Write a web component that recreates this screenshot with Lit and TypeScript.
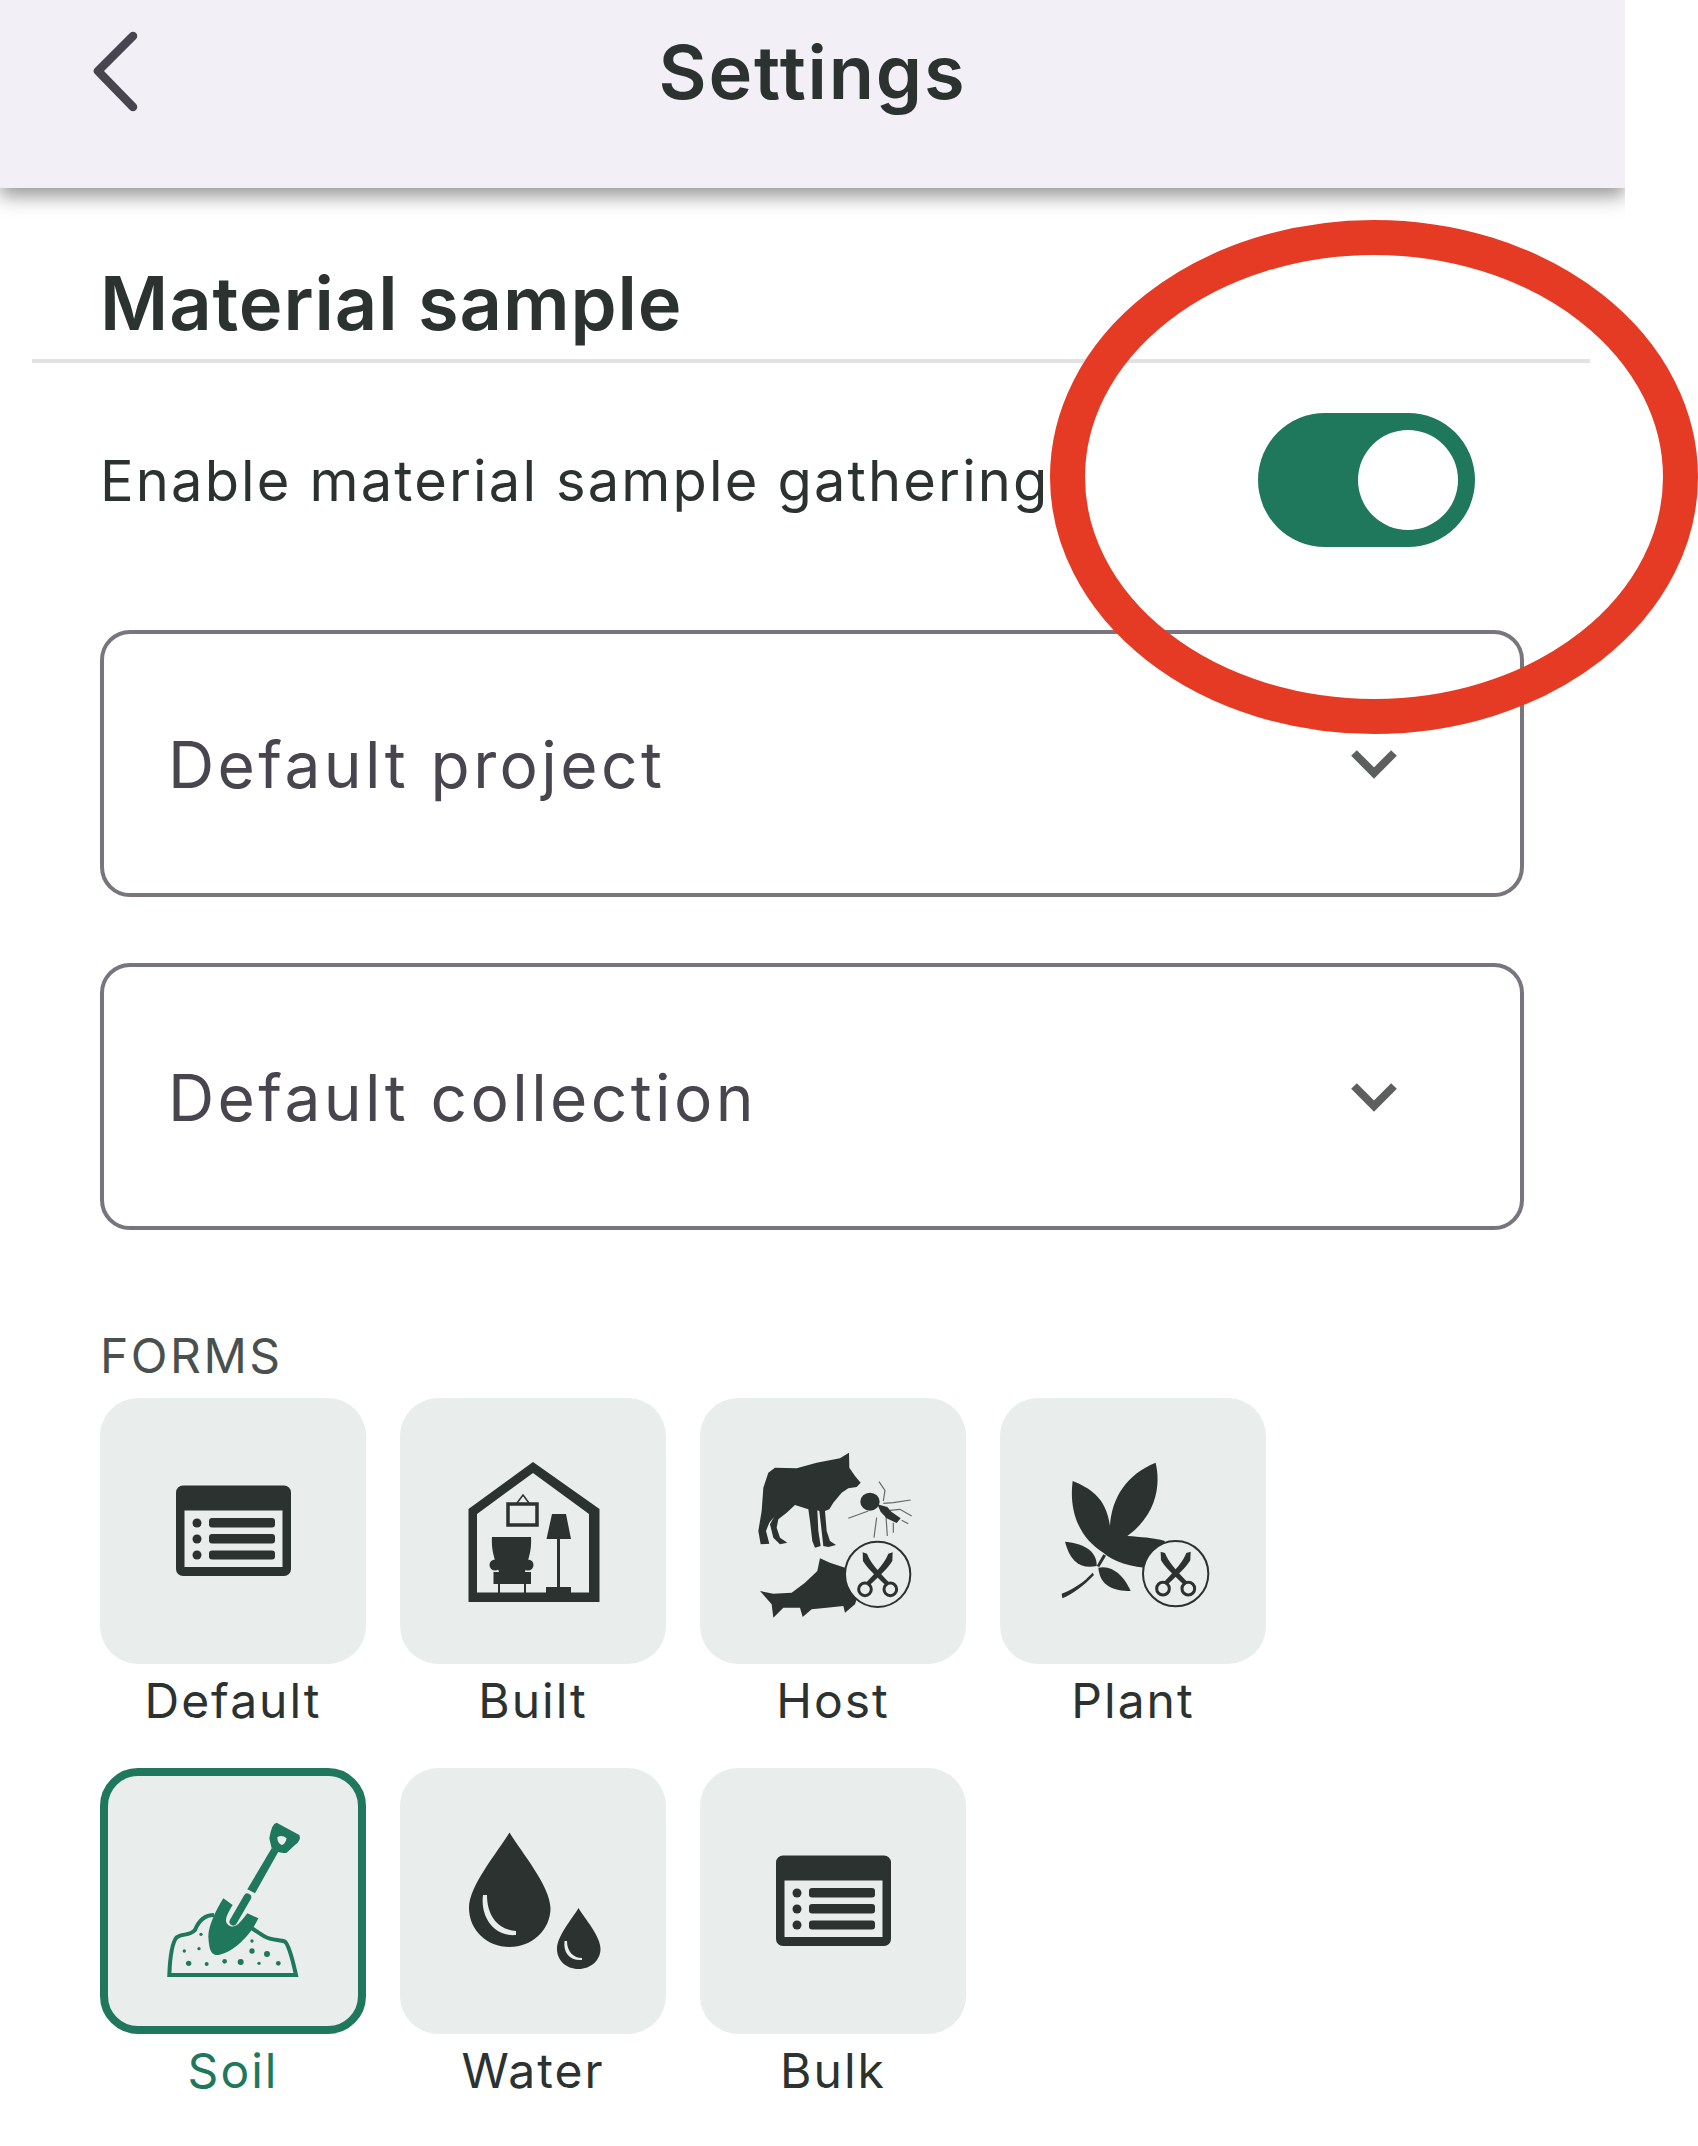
import { LitElement, css, html, svg } from 'lit';
import { customElement } from 'lit/decorators.js';
import { classMap } from 'lit/directives/class-map.js';

// icon coords were read off 3x crops, so they get scaled down by a third
const scissors = (dx: number, dy: number) => svg`
  <g transform="translate(${dx} ${dy})">
    <circle cx="443" cy="430" r="98" fill="#e9edec" stroke="currentColor" stroke-width="6" />
    <path d="M398 364 L411 368 C420 392 442 418 479 456 L470 465 C440 438 412 412 399 390Z" />
    <path d="M488 364 L475 368 C466 392 444 418 407 456 L416 465 C446 438 474 412 487 390Z" />
    <circle cx="405" cy="475" r="19" fill="none" stroke="currentColor" stroke-width="9" />
    <circle cx="481" cy="475" r="19" fill="none" stroke="currentColor" stroke-width="9" />
  </g>`;

const listIcon = svg`
  <path fill-rule="evenodd" d="M83 87.5H184a7 7 0 0 1 7 7V171a7 7 0 0 1-7 7H83a7 7 0 0 1-7-7V94.5a7 7 0 0 1 7-7ZM84.500 112.500V169H182.500V112.500Z" />
  <circle cx="97" cy="125" r="4.500" /><circle cx="97" cy="141" r="4.500" /><circle cx="97" cy="157" r="4.500" />
  <rect x="109" y="120" width="66" height="9.500" rx="3" />
  <rect x="109" y="136" width="66" height="9.500" rx="3" />
  <rect x="109" y="152.500" width="66" height="9" rx="3" />`;

const builtIcon = svg`
  <path fill-rule="evenodd" d="M133 64 L199.500 111 V204 H68.500 V111Z M133 75 L77 116 V194.500 H189 V116Z" />
  <path fill="none" stroke="currentColor" stroke-width="3.500" d="M108 106H137V127H108Z" />
  <path fill="none" stroke="currentColor" stroke-width="1.500" d="M117 105 L123 97 L129 105" />
  <path d="M152 116H166L171 141H146.500Z" />
  <rect x="157" y="141" width="3" height="50" />
  <rect x="146" y="189" width="25" height="6" />
  <path d="M92 139H131Q132 152 127 165 L125 174 H131 V186 H93.500 V174 H99 L96 165 Q91 152 92 139Z" />
  <circle cx="95" cy="167" r="5.500" /><circle cx="128" cy="167" r="5.500" />
  <rect x="98" y="186" width="2" height="9" /><rect x="124" y="186" width="2" height="9" />`;

const hostIcon = svg`
  <g transform="translate(30 33) scale(.3333)">
    <path d="M357 65 L358 110 L375 135 L392 155 L380 168 L355 172 L335 185 L310 215 L298 235 L285 240 L290 300 L300 330 L318 342 L295 348 L280 345 L275 300 L268 240 L262 238 L265 300 L272 345 L255 350 L247 330 L240 270 L235 235 L195 222 L170 245 L145 265 L140 290 L150 320 L172 335 L150 340 L130 320 L120 280 L132 258 L118 275 L108 300 L118 338 L92 340 L85 300 L95 240 L100 170 L115 125 L135 110 L200 112 L260 95 L330 82Z" />
    <ellipse cx="420" cy="212" rx="29" ry="27" />
    <path d="M442 220 L472 228 L484 242 L512 262 L500 276 L470 262 L452 242Z" />
    <path fill="none" stroke="currentColor" stroke-width="3.500" opacity=".7" d="M447 152L465 178L460 210M460 217L490 215L542 207M415 240L355 262M480 238L510 235L545 255M440 260L432 320M468 255L472 315M490 275L490 305M515 268L535 278" />
    <path d="M90 480 L130 488 L185 485 L225 455 L262 420 L270 382 L300 395 L345 410 L400 450 L375 520 L345 545 L340 525 L290 530 L245 535 L218 558 L210 530 L160 530 L130 560 L125 520Z" />
    ${scissors(0, 0)}
  </g>`;

const plantIcon = svg`
  <g transform="translate(40 33) scale(.3333)">
    <path d="M98 150 C145 170 198 195 210 285 C215 200 260 130 347 95 C362 160 352 250 262 315 C300 318 340 320 375 330 L340 412 C270 408 220 392 190 365 C125 325 85 250 98 150Z" />
    <path d="M75 332 C120 335 172 355 170 405 C120 415 90 390 75 332Z" />
    <path d="M175 410 C220 400 255 440 272 480 C220 480 180 465 175 410Z" />
    <path d="M65 488 C100 475 130 455 158 425 L162 432 C130 465 100 488 67 502Z" />
    <path d="M170 405 L190 370 L198 374 L178 408Z" />
    ${scissors(-36, -2)}
  </g>`;

const soilDots: [number, number, number][] = [
  [183, 433, 5], [133, 483, 5], [177, 476, 5], [336, 453, 5], [336, 483, 8], [381, 492, 9],
  [146, 520, 8], [200, 522, 6], [254, 514, 7], [302, 516, 9], [357, 520, 5], [415, 520, 7],
];

const soilIcon = svg`
  <g transform="translate(40 22) scale(.3333)">
    <path fill="none" stroke="currentColor" stroke-width="12" d="M222 375 C190 375 175 395 165 420 C150 438 125 430 110 442 C95 460 90 500 88 555 H468 C460 520 450 470 435 455 C420 448 395 452 375 440 C360 432 345 420 335 415" />
    <path d="M250 325 L278 345 C268 362 258 378 258 392 C260 408 280 416 295 402 C305 392 315 380 322 370 L355 385 C340 420 290 485 235 495 C215 495 208 485 205 440 C205 410 225 365 250 325Z" />
    <path fill="none" stroke="currentColor" stroke-width="23" stroke-linecap="round" d="M322 322 L280 395" />
    <path d="M322 298 L345 310 L415 185 L395 175Z" />
    <path fill-rule="evenodd" d="M410 98 L478 135 Q485 150 465 165 L440 188 Q415 192 395 175 L388 145 Q395 100 410 98Z M412 142 Q425 132 440 145 Q435 165 425 165 Q412 160 412 142Z" />
    ${soilDots.map(([cx, cy, r]) => svg`<circle cx=${cx} cy=${cy} r=${r} />`)}
  </g>`;

const waterIcon = svg`
  <path fill-rule="evenodd" d="M109.500 64.500 C122 85 150 118 150.500 140 C150.500 162 132 179 109.500 179 C87 179 69 162 69 140 C69 118 97 85 109.500 64.500Z M83 127 C80 150 95 169 116 167 L116 163 C100 162 87 150 87 127Z" />
  <path fill-rule="evenodd" d="M178.500 140 C185 151 200.500 168 200.500 181 C200.500 192 191 201 178.500 201 C166 201 157 192 157 181 C157 168 172 151 178.500 140Z M164.500 173 C163 185 170 193 182 192 L182 190 C174 190 167 184 167 173Z" />`;

const forms = [
  { label: 'Default', icon: listIcon },
  { label: 'Built', icon: builtIcon },
  { label: 'Host', icon: hostIcon },
  { label: 'Plant', icon: plantIcon },
  { label: 'Soil', icon: soilIcon, selected: true },
  { label: 'Water', icon: waterIcon },
  { label: 'Bulk', icon: listIcon },
];

@customElement('app-root')
export class AppRoot extends LitElement {
  static override styles = css`
    :host {
      display: block;
      position: relative;
      width: 1698px;
      height: 2146px;
      background: #fff;
      overflow: hidden;
      font-family: Inter, 'Liberation Sans', sans-serif;
      color: #2b3230;
    }
    .screen { width: 1625px; height: 100%; overflow: hidden; display: flex; flex-direction: column; }
    .bar {
      height: 188px;
      flex: none;
      box-sizing: border-box;
      background: #f2eff7;
      box-shadow: 0 8px 18px rgba(0, 0, 0, 0.42);
      display: grid;
      grid-template-columns: 1fr auto 1fr;
      padding-top: 30px;
      position: relative;
    }
    .back { width: 50px; height: 84px; margin-left: 90px; color: #49454f; }
    .bar h1 { margin: 0; font-size: 74px; line-height: 84px; font-weight: 600; letter-spacing: 1.800px; }
    .section { margin: 72px 35px 0 32px; padding: 0 0 0 68px; border-bottom: 4px solid #e2e2e4; height: 99px; }
    .section h2 { margin: 0; font-size: 74px; line-height: 86px; font-weight: 600; letter-spacing: 0.900px; }
    .row { display: flex; justify-content: space-between; align-items: center; margin: 50px 150px 0 100px; }
    .row span { font-size: 56px; line-height: 70px; padding-top: 2px; letter-spacing: 2.150px; }
    .toggle { width: 217px; height: 134px; box-sizing: border-box; padding: 17px; border-radius: 67px; background: #1f775c; display: flex; justify-content: flex-end; }
    .toggle i { width: 100px; height: 100px; border-radius: 50%; background: #fff; }
    .select {
      margin: 83px 0 0 100px;
      width: 1424px;
      height: 267px;
      box-sizing: border-box;
      border: 4px solid #79747e;
      border-radius: 30px;
      padding: 0 116px 0 64px;
      display: flex;
      align-items: center;
      justify-content: space-between;
      color: #49454f;
      font-size: 64px;
      letter-spacing: 3.400px;
    }
    .select span { padding-top: 2px; }
    .select + .select { margin-top: 66px; }
    .select svg { width: 60px; height: 44px; color: #5d5f5f; flex: none; margin-top: 3px; }
    .caption { margin: 100px 0 0 100px; font-size: 48px; line-height: 52px; letter-spacing: 2.500px; color: #49514f; }
    .forms { margin: 16px 0 0 100px; display: grid; grid-template-columns: repeat(4, 266px); column-gap: 34px; row-gap: 31px; }
    .form { display: flex; flex-direction: column; align-items: center; }
    .tile { width: 266px; height: 266px; box-sizing: border-box; border-radius: 38px; background: #e9edec; }
    .tile svg { display: block; width: 267px; height: 267px; fill: currentColor; }
    .form.on { color: #1f775c; }
    .form.on .tile { border: 8px solid #1f775c; }
    .form.on .tile svg { margin: -8px; }
    .form span { height: 73px; line-height: 73px; font-size: 48px; letter-spacing: 2px; }
    .mark { position: absolute; left: 0; top: 0; width: 1698px; height: 2146px; pointer-events: none; }
  `;

  private renderSelect(label: string) {
    return html`<div class="select">
      <span>${label}</span>
      <svg viewBox="0 0 60 44" fill="none" stroke="currentColor" stroke-width="8"><path d="M10 10 L30 30 L50 10" /></svg>
    </div>`;
  }

  override render() {
    return html`
      <div class="screen">
        <header class="bar">
          <svg class="back" viewBox="0 0 50 84" fill="none" stroke="currentColor" stroke-width="8.500" stroke-linecap="round" stroke-linejoin="round">
            <path d="M43 6 L8 41 L43 77" />
          </svg>
          <h1>Settings</h1>
        </header>
        <div class="section"><h2>Material sample</h2></div>
        <div class="row">
          <span>Enable material sample gathering</span>
          <div class="toggle"><i></i></div>
        </div>
        ${this.renderSelect('Default project')}
        ${this.renderSelect('Default collection')}
        <div class="caption">FORMS</div>
        <div class="forms">
          ${forms.map(
            (f) => html`<div class=${classMap({ form: true, on: !!f.selected })}>
              <div class="tile"><svg viewBox="0 0 267 267">${f.icon}</svg></div>
              <span>${f.label}</span>
            </div>`,
          )}
        </div>
      </div>
      <svg class="mark" viewBox="0 0 1698 2146">
        <ellipse cx="1374" cy="477" rx="306.500" ry="239.500" fill="none" stroke="#e53b24" stroke-width="35" />
      </svg>
    `;
  }
}
